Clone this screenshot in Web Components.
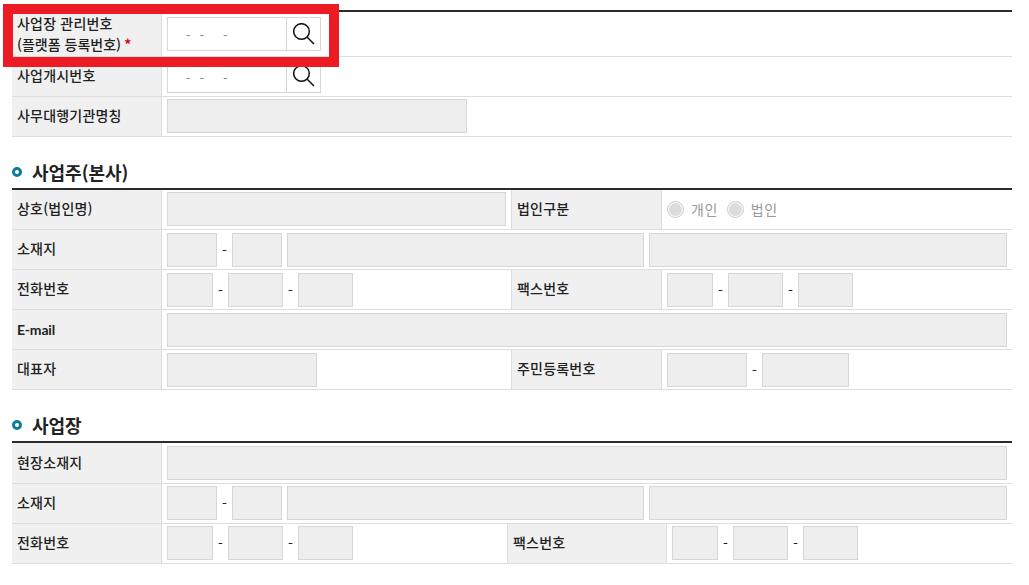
<!DOCTYPE html>
<html lang="ko">
<head>
<meta charset="utf-8">
<title>사업장</title>
<style>
  html, body { margin: 0; background: #fff; }
  body { font-family: "Noto Sans CJK KR", "Noto Sans", sans-serif; color: #222; overflow: hidden; height: 585px; }
  main { display: block; width: 1000px; margin-left: 12px; padding-top: 10px; }
</style>
</head>
<body>
<main>
  <form-table>
    <form-row h="45">
      <row-label w="150"><span style="display:block;margin-top:2px">사업장 관리번호<br><span style="letter-spacing:0">(플랫폼 등록번호)</span> <b style="color:#e60012;font-weight:700;margin-left:-1px">*</b></span></row-label>
      <row-cell><search-box></search-box></row-cell>
    </form-row>
    <form-row h="40">
      <row-label w="150">사업개시번호</row-label>
      <row-cell><search-box></search-box></row-cell>
    </form-row>
    <form-row h="40">
      <row-label w="150">사무대행기관명칭</row-label>
      <row-cell><text-box w="300"></text-box></row-cell>
    </form-row>
  </form-table>

  <section-title>사업주(본사)</section-title>
  <form-table>
    <form-row>
      <row-label w="150">상호(법인명)</row-label>
      <row-cell w="349"><text-box w="339"></text-box></row-cell>
      <row-label w="151" edge>법인구분</row-label>
      <row-cell>
        <radio-item>개인</radio-item>
        <radio-item>법인</radio-item>
      </row-cell>
    </form-row>
    <form-row low>
      <row-label w="150">소재지</row-label>
      <row-cell>
        <text-box w="50"></text-box><dash-mark></dash-mark><text-box w="50"></text-box>
        <text-box w="357" style="margin-left:5px"></text-box>
        <text-box w="358" style="margin-left:5px"></text-box>
      </row-cell>
    </form-row>
    <form-row low>
      <row-label w="150">전화번호</row-label>
      <row-cell w="349"><text-box w="46"></text-box><dash-mark></dash-mark><text-box w="55"></text-box><dash-mark></dash-mark><text-box w="55"></text-box></row-cell>
      <row-label w="151" edge>팩스번호</row-label>
      <row-cell><text-box w="46"></text-box><dash-mark></dash-mark><text-box w="55"></text-box><dash-mark></dash-mark><text-box w="55"></text-box></row-cell>
    </form-row>
    <form-row low>
      <row-label w="150"><span style="display:block;margin-top:2px;font-family:Lato,sans-serif;font-weight:700;letter-spacing:-.2px">E-mail</span></row-label>
      <row-cell><text-box w="840"></text-box></row-cell>
    </form-row>
    <form-row low>
      <row-label w="150">대표자</row-label>
      <row-cell w="349"><text-box w="150"></text-box></row-cell>
      <row-label w="151" edge>주민등록번호</row-label>
      <row-cell><text-box w="80"></text-box><dash-mark></dash-mark><text-box w="87"></text-box></row-cell>
    </form-row>
  </form-table>

  <section-title>사업장</section-title>
  <form-table>
    <form-row h="41">
      <row-label w="150">현장소재지</row-label>
      <row-cell><text-box w="840"></text-box></row-cell>
    </form-row>
    <form-row>
      <row-label w="150">소재지</row-label>
      <row-cell>
        <text-box w="50"></text-box><dash-mark></dash-mark><text-box w="50"></text-box>
        <text-box w="357" style="margin-left:5px"></text-box>
        <text-box w="358" style="margin-left:5px"></text-box>
      </row-cell>
    </form-row>
    <form-row>
      <row-label w="150">전화번호</row-label>
      <row-cell w="345"><text-box w="46"></text-box><dash-mark></dash-mark><text-box w="55"></text-box><dash-mark></dash-mark><text-box w="55"></text-box></row-cell>
      <row-label w="160" edge>팩스번호</row-label>
      <row-cell><text-box w="46"></text-box><dash-mark></dash-mark><text-box w="55"></text-box><dash-mark></dash-mark><text-box w="55"></text-box></row-cell>
    </form-row>
  </form-table>
</main>
<red-mark></red-mark>

<script>
class FormTable extends HTMLElement {
  connectedCallback() {
    this.attachShadow({ mode: 'open' });
    this.shadowRoot.innerHTML = `
      <style>
        :host { display: block; border-top: 2px solid #2b2b2b; }
      </style>
      <slot></slot>`;
  }
}
class FormRow extends HTMLElement {
  connectedCallback() {
    const h = this.getAttribute('h') || 40;
    const low = this.hasAttribute('low');
    this.attachShadow({ mode: 'open' });
    this.shadowRoot.innerHTML = `
      <style>
        :host {
          display: flex; box-sizing: border-box; height: ${h}px; border-bottom: 1px solid #ddd;
          --cell-bottom: ${low ? '0' : '1px'};
        }
      </style>
      <slot></slot>`;
  }
}
class RowLabel extends HTMLElement {
  connectedCallback() {
    const w = this.getAttribute('w') || 150;
    const edge = this.hasAttribute('edge');
    this.attachShadow({ mode: 'open' });
    this.shadowRoot.innerHTML = `
      <style>
        :host {
          display: flex; align-items: center; box-sizing: border-box; flex: none;
          width: ${w}px; padding: 0 0 2px 5px; background: #f0f0f0;
          border-right: 1px solid #ddd; ${edge ? 'border-left: 1px solid #ddd;' : ''}
          font-size: 14px; font-weight: 500; letter-spacing: .2px;
          line-height: 21px; color: #222;
        }
      </style>
      <slot></slot>`;
  }
}
class RowCell extends HTMLElement {
  connectedCallback() {
    const w = this.getAttribute('w');
    this.attachShadow({ mode: 'open' });
    this.shadowRoot.innerHTML = `
      <style>
        :host {
          display: flex; align-items: center; box-sizing: border-box;
          ${w ? `flex: none; width: ${w}px;` : 'flex: 1;'}
          padding: 0 5px var(--cell-bottom, 1px);
        }
      </style>
      <slot></slot>`;
  }
}
class TextBox extends HTMLElement {
  connectedCallback() {
    const w = this.getAttribute('w') || 50;
    this.attachShadow({ mode: 'open' });
    this.shadowRoot.innerHTML = `
      <style>
        :host {
          display: block; flex: none; box-sizing: border-box; width: ${w}px; height: 34px;
          background: #eee; border: 1px solid #d6d6d6;
        }
      </style>`;
  }
}
class DashMark extends HTMLElement {
  connectedCallback() {
    this.attachShadow({ mode: 'open' });
    this.shadowRoot.innerHTML = `
      <style>
        :host { display: block; flex: none; width: 15px; text-align: center; font-size: 14px; color: #222; }
      </style>-`;
  }
}
class SearchBox extends HTMLElement {
  connectedCallback() {
    this.attachShadow({ mode: 'open' });
    this.shadowRoot.innerHTML = `
      <style>
        :host {
          display: flex; box-sizing: border-box; width: 154px; height: 34px;
          border: 1px solid #d6d6d6; background: #fff;
        }
        .mask {
          flex: 1; display: flex; align-items: center; padding: 2px 0 0 18px; gap: 9px;
          font-size: 13px; color: #888;
        }
        .mask span:last-child { margin-left: 10px; }
        .btn {
          flex: none; width: 33px; display: flex; align-items: center; justify-content: center;
          border-left: 1px solid #d6d6d6;
        }
      </style>
      <div class="mask"><span>-</span><span>-</span><span>-</span></div>
      <div class="btn">
        <svg width="22" height="22" viewBox="0 0 22 22" fill="none" stroke="#111">
          <circle cx="8.5" cy="8.5" r="7.8" stroke-width="1.5"/>
          <path d="M14.2 14.2 L21 21" stroke-width="1.5"/>
        </svg>
      </div>`;
  }
}
class RadioItem extends HTMLElement {
  connectedCallback() {
    this.attachShadow({ mode: 'open' });
    this.shadowRoot.innerHTML = `
      <style>
        :host { display: flex; align-items: center; gap: 7px; margin-right: 9px; font-size: 14px; letter-spacing: .5px; color: #999; }
        i { display: block; box-sizing: border-box; width: 17px; height: 17px; border-radius: 50%; background: #dcdcdc; border: 1px solid #d0d0d0; box-shadow: inset 0 0 0 1px #fff; }
      </style>
      <i></i><slot></slot>`;
  }
}
class SectionTitle extends HTMLElement {
  connectedCallback() {
    this.attachShadow({ mode: 'open' });
    this.shadowRoot.innerHTML = `
      <style>
        :host {
          display: flex; align-items: center; gap: 10px; box-sizing: border-box; height: 31px;
          margin-top: 20px; padding-bottom: 2px;
          font-size: 18px; font-weight: 700; color: #222;
        }
        i { display: block; box-sizing: border-box; width: 10px; height: 10px; border-radius: 50%; border: 3px solid #0e7c9a; background: #fff; }
      </style>
      <i></i><slot></slot>`;
  }
}
// red highlight drawn over the screenshot, sits on top of the first row
class RedMark extends HTMLElement {
  connectedCallback() {
    this.attachShadow({ mode: 'open' });
    this.shadowRoot.innerHTML = `
      <style>
        :host {
          position: absolute; left: 3px; top: 4px; box-sizing: border-box;
          width: 336px; height: 63px; border: 10px solid #ed1c24;
        }
      </style>`;
  }
}
customElements.define('form-table', FormTable);
customElements.define('form-row', FormRow);
customElements.define('row-label', RowLabel);
customElements.define('row-cell', RowCell);
customElements.define('text-box', TextBox);
customElements.define('dash-mark', DashMark);
customElements.define('search-box', SearchBox);
customElements.define('radio-item', RadioItem);
customElements.define('section-title', SectionTitle);
customElements.define('red-mark', RedMark);
</script>
</body>
</html>
